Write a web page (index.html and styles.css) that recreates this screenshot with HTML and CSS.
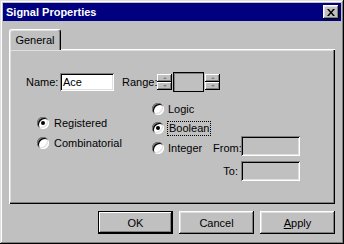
FILE: index.html
```html
<!DOCTYPE html>
<html lang="en">

<head>
    <meta charset="UTF-8">
    <title>Signal Properties</title>
    <link rel="stylesheet" href="styles.css">
</head>

<body>
    <div class="window">
        <div class="titlebar">
            <span class="title">Signal Properties</span>
            <button class="close" aria-label="Close">
                <svg width="8" height="7" viewBox="0 0 8 7">
                    <path d="M0 0h2l2 2.4L6 0h2L5 3.5 8 7H6L4 4.6 2 7H0l3-3.5z" fill="#000"/>
                </svg>
            </button>
        </div>

        <div class="content">
            <div class="tabs">
                <div class="tab">General</div>
            </div>

            <div class="panel">
                <!-- Name and range -->
                <div class="name-row">
                    <span class="lbl-name">Name:</span>
                    <div class="field name">Ace</div>
                    <span class="lbl-range">Range:</span>
                    <div class="spin">
                        <div class="spin-btn up"></div>
                        <div class="spin-btn down"></div>
                    </div>
                    <div class="range-box"></div>
                    <div class="spin">
                        <div class="spin-btn up"></div>
                        <div class="spin-btn down"></div>
                    </div>
                </div>

                <!-- Radio groups -->
                <div class="options">
                    <div class="col-left">
                        <div class="opt"><span class="radio checked"></span>Registered</div>
                        <div class="opt"><span class="radio"></span>Combinatorial</div>
                    </div>
                    <div class="col-right">
                        <div class="opt logic"><span class="radio"></span>Logic</div>
                        <div class="opt boolean"><span class="radio checked"></span><span class="focus">Boolean</span></div>
                        <div class="int-row">
                            <div class="opt int"><span class="radio"></span>Integer</div>
                            <span class="lbl-from">From:</span>
                            <div class="field bound from"></div>
                        </div>
                        <div class="to-row">
                            <span class="lbl-to">To:</span>
                            <div class="field bound"></div>
                        </div>
                    </div>
                </div>
            </div>

            <div class="actions">
                <button class="btn default">OK</button>
                <button class="btn">Cancel</button>
                <button class="btn"><u>A</u>pply</button>
            </div>
        </div>
    </div>
</body>

</html>
```

FILE: styles.css
```css
* {
    box-sizing: border-box;
}

body {
    margin: 0;
    background: #c0c0c0;
    font-family: "Liberation Sans", Arial, sans-serif;
    font-size: 11px;
    color: #000;
}

.window {
    width: 344px;
    height: 244px;
    padding: 3px;
    background: #c0c0c0;
    box-shadow: inset -1px -1px #000, inset 1px 1px #dfdfdf,
        inset -2px -2px #808080, inset 2px 2px #fff;
}

.titlebar {
    height: 18px;
    background: #000080;
    color: #fff;
    display: flex;
    align-items: center;
    justify-content: space-between;
    padding: 0 2px 0 3px;
}

.title {
    font-weight: bold;
    font-size: 11px;
}

.close {
    width: 16px;
    height: 14px;
    padding: 0;
    border: none;
    background: #c0c0c0;
    display: flex;
    align-items: center;
    justify-content: center;
    box-shadow: inset -1px -1px #000, inset 1px 1px #fff,
        inset -2px -2px #808080, inset 2px 2px #dfdfdf;
}

.content {
    padding: 8px 6px 0 6px;
}

.tabs {
    display: flex;
}

.tab {
    position: relative;
    z-index: 1;
    width: 52px;
    height: 21px;
    margin-bottom: -1px;
    background: #c0c0c0;
    border-top: 1px solid #fff;
    border-left: 1px solid #fff;
    border-right: 1px solid #000;
    border-radius: 3px 3px 0 0;
    box-shadow: inset -1px 0 #808080, inset 1px 1px #dfdfdf;
    display: flex;
    align-items: center;
    justify-content: center;
    padding-bottom: 1px;
}

.panel {
    height: 155px;
    padding-top: 23px;
    box-shadow: inset 1px 1px #fff, inset -1px -1px #000,
        inset -2px -2px #808080, inset 2px 2px #dfdfdf;
}

/* sunken edit box */
.field {
    height: 18px;
    box-shadow: inset 1px 1px #808080, inset -1px -1px #fff,
        inset 2px 2px #000, inset -2px -2px #dfdfdf;
}

.name-row {
    display: flex;
    align-items: center;
    height: 20px;
    margin-left: 17px;
}

.lbl-name {
    width: 34px;
}

.field.name {
    width: 54px;
    background: #fff;
    padding: 3px 0 0 3px;
}

.lbl-range {
    width: 35px;
    margin-left: 8px;
}

.spin {
    display: flex;
    flex-direction: column;
    width: 15px;
    height: 16px;
}

.spin-btn {
    flex: 1;
    display: flex;
    align-items: center;
    justify-content: center;
    background: #c0c0c0;
    box-shadow: inset -1px -1px #000, inset 1px 1px #fff,
        inset -2px -2px #808080;
}

.spin-btn::after {
    content: '';
    border-left: 2px solid transparent;
    border-right: 2px solid transparent;
}

.spin-btn.up::after {
    border-bottom: 2px solid #808080;
}

.spin-btn.down::after {
    border-top: 2px solid #808080;
}

.range-box {
    width: 31px;
    height: 20px;
    margin: 0 1px;
    border: 1px solid #000;
    box-shadow: inset 1px 1px #808080;
}

.options {
    display: flex;
    margin-left: 28px;
}

.col-left {
    width: 115px;
    padding-top: 21px;
}

.col-right {
    padding-top: 8px;
}

.opt {
    display: flex;
    align-items: center;
    gap: 5px;
    height: 20px;
}

.col-right .opt {
    gap: 4px;
}

.opt.logic {
    height: 18px;
}

.radio {
    position: relative;
    width: 12px;
    height: 12px;
    border-radius: 50%;
    background: #fff;
    box-shadow: inset 1px 1px #808080, inset -1px -1px #fff,
        inset 2px 2px #000, inset -2px -2px #dfdfdf;
}

.radio.checked::after {
    content: '';
    position: absolute;
    left: 4px;
    top: 4px;
    width: 4px;
    height: 4px;
    border-radius: 50%;
    background: #000;
}

.focus {
    border: 1px dotted #000;
    padding: 0 1px;
    margin-left: -1px;
    line-height: 13px;
}

.int-row {
    display: flex;
    align-items: center;
    height: 20px;
}

.opt.int {
    width: 61px;
}

.lbl-from {
    width: 28px;
}

.field.bound {
    width: 59px;
    height: 20px;
    background: #c0c0c0;
}

.field.from {
    align-self: flex-start;
    margin-top: -2px;
}

.to-row {
    display: flex;
    align-items: center;
    height: 20px;
    margin-top: 3px;
}

.lbl-to {
    width: 89px;
    text-align: right;
    padding-right: 3px;
}

.actions {
    display: flex;
    justify-content: flex-end;
    gap: 6px;
    margin-top: 7px;
}

.btn {
    width: 75px;
    height: 23px;
    padding: 0;
    border: none;
    background: #c0c0c0;
    font-family: inherit;
    font-size: 11px;
    color: #000;
    box-shadow: inset -1px -1px #000, inset 1px 1px #fff,
        inset -2px -2px #808080, inset 2px 2px #dfdfdf;
}

.btn.default {
    border: 1px solid #000;
    box-shadow: inset -1px -1px #000, inset 1px 1px #fff,
        inset -2px -2px #808080;
}
```
